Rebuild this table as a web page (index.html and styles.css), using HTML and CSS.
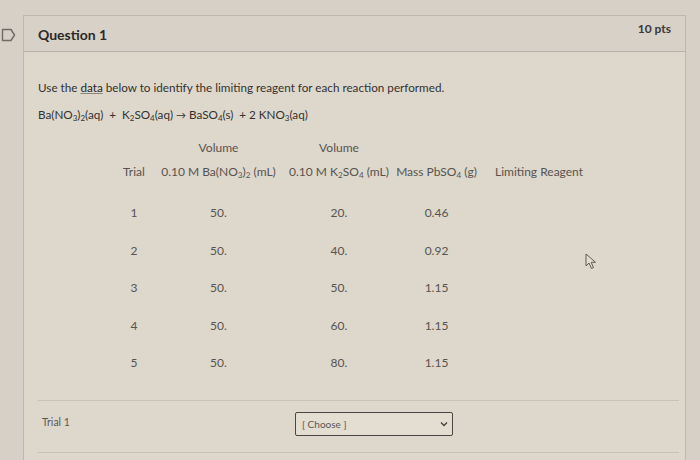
FILE: index.html
```html
<!DOCTYPE html>
<html>
<head>
<meta charset="utf-8">
<link rel="stylesheet" href="styles.css">
</head>
<body>
<div class="page">
  <div class="flag-col">
    <svg class="flag" width="15" height="14" viewBox="0 0 15 14"><path d="M1.5 1.5 H10 L13.5 7 L10 12.5 H1.5 Z" fill="none" stroke="#6f6b66" stroke-width="1.4" stroke-linejoin="round"/></svg>
  </div>
  <div class="card">
    <div class="card-head">
      <span class="q-title">Question 1</span>
      <span class="pts">10 pts</span>
    </div>
    <div class="card-body">
      <p class="intro">Use the <span class="link">data</span> below to identify the limiting reagent for each reaction performed.</p>
      <p class="eq">Ba(NO<sub>3</sub>)<sub>2</sub>(aq)&nbsp;&nbsp;+&nbsp;&nbsp;K<sub>2</sub>SO<sub>4</sub>(aq) <span class="arrow">&rarr;</span> BaSO<sub>4</sub>(s)&nbsp;&nbsp;+ 2 KNO<sub>3</sub>(aq)</p>
      <div class="grid">
        <div class="cell vol"></div><div class="cell vol">Volume</div><div class="cell vol">Volume</div><div class="cell vol"></div><div class="cell vol"></div>
        <div class="cell hd">Trial</div><div class="cell hd">0.10 M Ba(NO<sub>3</sub>)<sub>2</sub> (mL)</div><div class="cell hd">0.10 M K<sub>2</sub>SO<sub>4</sub> (mL)</div><div class="cell hd">Mass PbSO<sub>4</sub> (g)</div><div class="cell hd">Limiting Reagent</div>
        <div class="cell">1</div><div class="cell">50.</div><div class="cell">20.</div><div class="cell">0.46</div><div class="cell"></div>
        <div class="cell">2</div><div class="cell">50.</div><div class="cell">40.</div><div class="cell">0.92</div><div class="cell"></div>
        <div class="cell">3</div><div class="cell">50.</div><div class="cell">50.</div><div class="cell">1.15</div><div class="cell"></div>
        <div class="cell">4</div><div class="cell">50.</div><div class="cell">60.</div><div class="cell">1.15</div><div class="cell"></div>
        <div class="cell">5</div><div class="cell">50.</div><div class="cell">80.</div><div class="cell">1.15</div><div class="cell"></div>
      </div>
      <div class="answer-row">
        <span class="ans-label">Trial 1</span>
        <div class="select">
          <span>[ Choose ]</span>
          <svg width="8" height="6" viewBox="0 0 8 6"><path d="M1 1.5 L4 4.5 L7 1.5" fill="none" stroke="#444" stroke-width="1.4"/></svg>
        </div>
      </div>
      <div class="answer-end"></div>
    </div>
  </div>
  <svg class="cursor" width="14" height="18" viewBox="0 0 14 18"><path d="M1 1 L1 13 L4 10 L6.5 15.5 L8.5 14.6 L6.2 9.3 L10.5 9.3 Z" fill="#e2dcd0" stroke="#5d5a55" stroke-width="1" stroke-linejoin="round"/></svg>
</div>
</body>
</html>
```

FILE: styles.css
```css
html, body {
  margin: 0;
  padding: 0;
}
body {
  background: #d6d0c6;
  font-family: Lato, "Open Sans", sans-serif;
  width: 700px;
  height: 460px;
  overflow: hidden;
}
.page {
  position: relative;
  display: flex;
  height: 460px;
}
.flag-col {
  width: 23px;
  flex: none;
  padding-top: 28px;
  box-sizing: border-box;
}
.flag {
  display: block;
  margin-left: 1px;
}
.card {
  margin-top: 15px;
  width: 661px;
  flex: none;
  border: 1px solid #bdb7ad;
  border-bottom: none;
  background: #ddd7cc;
}
.card-head {
  height: 35px;
  display: flex;
  align-items: center;
  justify-content: space-between;
  padding: 0 14px 0 14px;
  background: #d7d1c7;
  border-bottom: 1px solid #b9b3a9;
}
.q-title {
  font-weight: 700;
  font-size: 14px;
  color: #2c2a28;
  margin-top: 1px;
}
.pts {
  font-weight: 700;
  font-size: 12px;
  color: #3a3835;
  margin-top: -10px;
}
.card-body {
  padding: 0 6px 0 14px;
}
.intro {
  margin: 28px 0 0 0;
  font-size: 11.7px;
  color: #34322f;
}
.link {
  color: #2a2826;
  text-decoration: underline;
  text-decoration-color: #8a857d;
}
.eq {
  margin: 13px 0 0 0;
  font-size: 11.7px;
  color: #34322f;
}
sub {
  font-size: 0.68em;
  vertical-align: -0.25em;
  line-height: 0;
}
.arrow {
  font-size: 10px;
}
.grid {
  display: grid;
  grid-template-columns: 38px 131px 110px 85px 120px;
  margin: 15px 0 0 77px;
  color: #57544f;
  font-size: 12px;
}
.cell {
  text-align: center;
  height: 37.5px;
  line-height: 37.5px;
  white-space: nowrap;
}
.cell.vol {
  height: 24px;
  line-height: 24px;
}
.cell.hd {
  height: 34px;
  line-height: 24px;
}
.answer-row {
  margin-top: 18px;
  border-top: 1px solid #c7c1b7;
  height: 51px;
  display: flex;
  align-items: center;
  position: relative;
}
.ans-label {
  font-size: 10.5px;
  color: #5a5752;
  margin-left: 4px;
  margin-top: -8px;
}
.select {
  position: absolute;
  left: 257px;
  top: 11px;
  width: 146px;
  height: 22px;
  border: 1.5px solid #4a4743;
  border-radius: 2px;
  background: #e3ddd2;
  display: flex;
  align-items: center;
  justify-content: space-between;
  padding: 0 4px 0 6px;
  font-size: 10px;
  color: #5a5752;
  box-sizing: content-box;
}
.answer-end {
  border-top: 1px solid #c7c1b7;
}
.cursor {
  position: absolute;
  left: 585px;
  top: 253px;
}
```
